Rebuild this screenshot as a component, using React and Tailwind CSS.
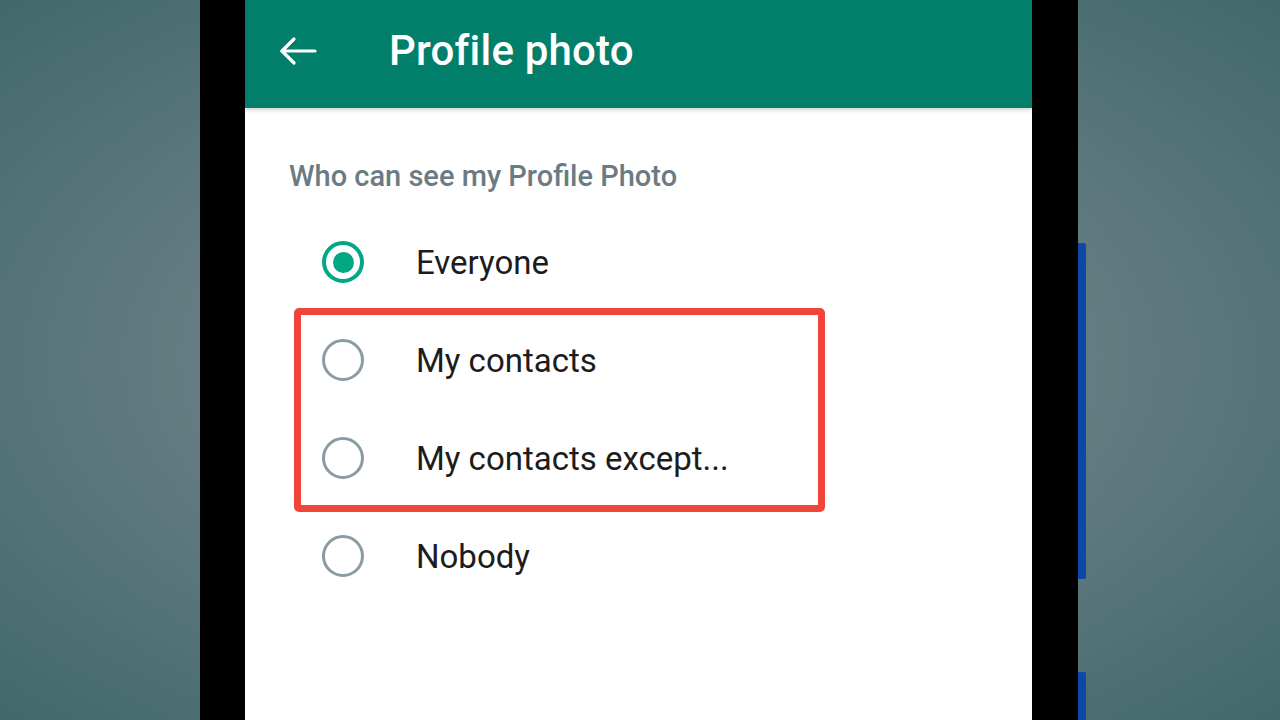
import React from "react";

// ── Radio options ────────────────────────────────────────────────────────────
const options = [
  { label: "Everyone", checked: true },
  { label: "My contacts" },
  { label: "My contacts except..." },
  { label: "Nobody" },
];

const Radio = ({ checked }) =>
  checked ? (
    <div className="w-[42px] h-[42px] rounded-full border-[4px] border-[#00a884] flex items-center justify-center">
      <div className="w-[21px] h-[21px] rounded-full bg-[#00a884]" />
    </div>
  ) : (
    <div className="w-[42px] h-[42px] rounded-full border-[3.5px] border-[#8a9ba3]" />
  );

const App = () => {
  return (
    <div className="w-[1280px] h-[720px] flex overflow-hidden bg-[radial-gradient(ellipse_at_center,#7e9397_0%,#667e83_45%,#42686a_100%)] font-['Roboto',sans-serif]">
      {/* left backdrop */}
      <div className="w-[200px] flex-shrink-0" />

      {/* ── Phone ── */}
      <div className="w-[878px] flex-shrink-0 bg-black pl-[45px] pr-[46px]">
        <div className="relative h-full bg-white">
          {/* App bar */}
          <div className="h-[108px] bg-[#017f6a] flex items-center pb-[6px] shadow-[0_2px_4px_rgba(0,0,0,0.18)]">
            <svg className="ml-[34px] w-[38px] h-[30px]" viewBox="0 0 38 30" fill="none" stroke="white" strokeWidth="3.2" strokeLinecap="round" strokeLinejoin="round">
              <path d="M36 15H3" />
              <path d="M15 3L3 15l12 12" />
            </svg>
            <h1 className="ml-[72px] text-white text-[42px] font-medium leading-none tracking-[0.2px]">
              Profile photo
            </h1>
          </div>

          {/* Section */}
          <div className="pt-[52px]">
            <p className="pl-[44px] text-[29px] leading-[32px] font-medium text-[#6b7b84]">
              Who can see my Profile Photo
            </p>
            <div className="pt-[21px]">
              {options.map((o) => (
                <div key={o.label} className="h-[98px] flex items-center pl-[77px]">
                  <Radio checked={o.checked} />
                  <span className="ml-[52px] text-[33px] text-[#1c1c1c] leading-none">
                    {o.label}
                  </span>
                </div>
              ))}
            </div>
          </div>

          {/* Annotation box */}
          <div className="absolute left-[49px] top-[308px] w-[531px] h-[204px] border-[7px] border-[#f2453a] rounded-[5px]" />
        </div>
      </div>

      {/* side edge with blue strips */}
      <div className="w-[8px] flex-shrink-0 flex flex-col">
        <div className="h-[243px]" />
        <div className="h-[336px] bg-[#0d47a8] rounded-r-[2px]" />
        <div className="h-[93px]" />
        <div className="flex-1 bg-[#0d47a8] rounded-tr-[2px]" />
      </div>
    </div>
  );
};

export default App;
